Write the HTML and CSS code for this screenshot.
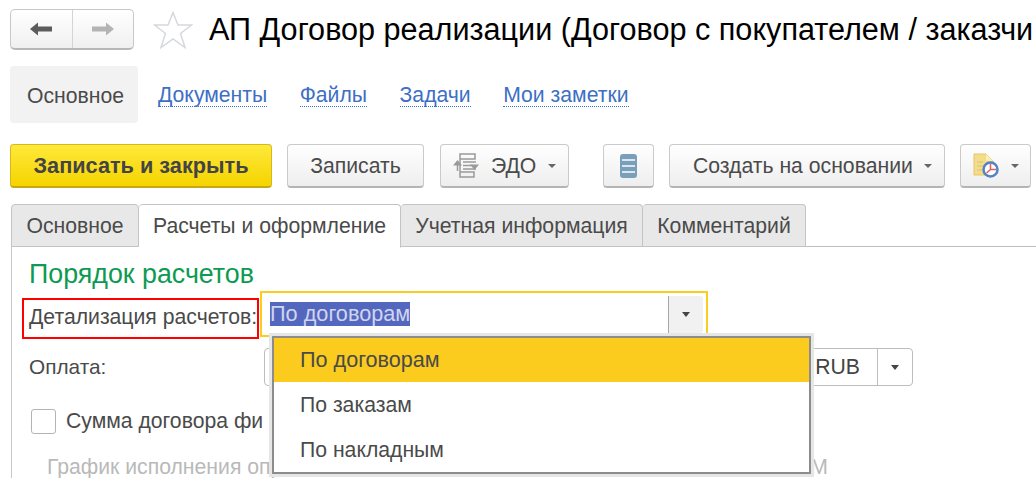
FILE: index.html
```html
<!DOCTYPE html>
<html lang="ru">
<head>
<meta charset="utf-8">
<title>АП Договор реализации</title>
<link rel="stylesheet" href="styles.css">
</head>
<body>
<div class="page">
  <header class="head">
    <div class="nav-group">
      <button class="nav-btn">
        <svg width="24" height="16" viewBox="0 0 24 16"><path d="M1 8 9 1.500V5.500H23V10.500H9V14.500Z" fill="#5c5c5c"/></svg>
      </button>
      <button class="nav-btn">
        <svg width="24" height="16" viewBox="0 0 24 16"><path d="M23 8 15 1.500V5.500H1V10.500H15V14.500Z" fill="#b4b4b4"/></svg>
      </button>
    </div>
    <svg class="star" width="40" height="38" viewBox="0 0 40 38"><path d="M20 1.500 25 14H38.500L27.500 22.500 32 36.500 20 28 8 36.500 12.500 22.500 1.500 14H15Z" fill="#fff" stroke="#d5d8dc" stroke-width="1.500"/></svg>
    <h1 class="title">АП Договор реализации (Договор с покупателем / заказчи</h1>
  </header>

  <nav class="sections">
    <span class="section-current">Основное</span>
    <a class="section-link">Документы</a>
    <a class="section-link">Файлы</a>
    <a class="section-link">Задачи</a>
    <a class="section-link">Мои заметки</a>
  </nav>

  <div class="toolbar">
    <button class="btn btn-primary">Записать и закрыть</button>
    <button class="btn btn-save">Записать</button>
    <button class="btn btn-edo">
      <svg width="26" height="25" viewBox="0 0 26 25" fill="none" stroke="#9a9a9a" stroke-width="1.500"><path d="M7 1H22V6H7ZM7 6V19M7 19H21V24H7ZM10 9H23M10 12.500H20M10 16H23"/><path d="M4.500 7 0 12.500H9ZM21.500 17 17 11.500H26Z" fill="#9a9a9a" stroke="none"/><path d="M4.500 12V18"/></svg>
      <span>ЭДО</span><i class="caret"></i>
    </button>
    <button class="btn btn-icon">
      <svg width="17" height="24" viewBox="0 0 17 24"><rect width="17" height="24" rx="3" fill="#7a9fbb"/><path d="M2 6H15M2 12H15M2 18H15" stroke="#dbe6ee" stroke-width="2"/></svg>
    </button>
    <button class="btn btn-create"><span>Создать на основании</span><i class="caret"></i></button>
    <button class="btn btn-doc">
      <svg width="26" height="25" viewBox="0 0 26 25"><path d="M1 1H13L20 8V22H1Z" fill="#f3dc8a" stroke="#e6c566"/><path d="M13 1V8H20Z" fill="#fbeeb9"/><path d="M4 9H10M4 13H12M4 17H9" stroke="#dcc272"/><circle cx="17.500" cy="16.500" r="7" fill="#fff" stroke="#5482c4" stroke-width="2.500"/><path d="M17.500 16.500V11M17.500 16.500H23M17.500 16.500 13.500 20" stroke="#e06060" stroke-width="1.500"/></svg>
      <i class="caret"></i>
    </button>
  </div>

  <div class="tabs">
    <span class="tab tab-1">Основное</span>
    <span class="tab tab-2 tab-active">Расчеты и оформление</span>
    <span class="tab tab-3">Учетная информация</span>
    <span class="tab tab-4">Комментарий</span>
  </div>

  <main class="panel">
    <h2 class="group-title">Порядок расчетов</h2>
    <div class="row row-detail">
      <label class="label-marked">Детализация расчетов:</label>
      <div class="combo-focus">
        <div class="combo-value"><span class="selected">По договорам</span></div>
        <div class="combo-arrow"><i class="caret caret-dark"></i></div>
      </div>
    </div>
    <div class="row row-pay">
      <label class="label-plain">Оплата:</label>
      <div class="combo-plain">
        <span class="currency">RUB</span>
        <div class="combo-plain-arrow"><i class="caret caret-dark"></i></div>
      </div>
    </div>
    <div class="row row-check">
      <span class="checkbox"></span>
      <span class="check-text">Сумма договора фи</span>
    </div>
    <div class="row row-muted">
      <span>График исполнения опр</span>
      <span class="muted-tail">М</span>
    </div>

    <ul class="popup">
      <li class="popup-item popup-item-on">По договорам</li>
      <li class="popup-item">По заказам</li>
      <li class="popup-item">По накладным</li>
    </ul>
  </main>
</div>
</body>
</html>
```
FILE: styles.css
```css
* { box-sizing: border-box; }
html, body { margin: 0; background: #fff; }
body { font-family: "Liberation Sans", Arial, sans-serif; color: #4a4a4a; }
.page { width: 1036px; height: 478px; overflow: hidden; display: flex; flex-direction: column; }

button { font: inherit; color: inherit; padding: 0; }

.head { display: flex; align-items: center; height: 41px; margin-top: 9px; padding-left: 10px; white-space: nowrap; }
.nav-group { display: flex; width: 124px; height: 41px; border: 1px solid #c8c8c8; border-bottom: 2px solid #b8b8b8; border-radius: 5px; background: linear-gradient(#fff, #f0f0f0); flex: none; }
.nav-btn { flex: 1; border: 0; background: none; display: flex; align-items: center; justify-content: center; }
.nav-btn + .nav-btn { border-left: 1px solid #d4d4d4; }
.star { margin-left: 19px; flex: none; }
.title { margin: 0 0 0 16px; font-size: 30.600px; font-weight: 400; color: #000; line-height: 41px; flex: none; }

.sections { display: flex; align-items: center; height: 57px; margin: 16px 0 0 10px; font-size: 21.200px; }
.section-current { display: flex; align-items: center; width: 128px; height: 57px; padding: 2px 0 0 17px; background: #f2f2f2; border-radius: 4px; }
.section-link { color: #3d6fc4; border-bottom: 1px dotted #3d6fc4; line-height: 22px; margin: 2px 0 0 32.500px; }
.section-current + .section-link { margin-left: 20px; }

.toolbar { display: flex; height: 44px; margin: 21px 0 0 10px; font-size: 21.200px; }
.btn { height: 44px; border: 1px solid #cacaca; border-bottom: 2px solid #b4b4b4; border-radius: 4px; background: linear-gradient(#fff, #eeeeee); display: flex; align-items: center; justify-content: center; flex: none; margin-left: 15px; }
.btn-primary { width: 262px; margin-left: 0; font-weight: 700; font-size: 21.700px; color: #444; background: linear-gradient(#ffe93a, #f5d400); border-color: #d6b81c; border-bottom-color: #c5a814; }
.btn-save { width: 137px; }
.btn-edo { width: 129px; margin-left: 16px; gap: 12px; justify-content: flex-start; padding-left: 12px; }
.btn-icon { width: 51px; margin-left: 34px; }
.btn-create { width: 276px; gap: 11px; justify-content: flex-start; padding-left: 23px; }
.btn-doc { width: 71px; gap: 12px; justify-content: flex-start; padding-left: 12px; }
.caret { display: inline-block; width: 0; height: 0; border: 4.500px solid transparent; border-top: 4px solid #666; border-bottom: 0; flex: none; }
.caret-dark { border-top-color: #444; border-width: 5px 4.500px 0; }

.tabs { display: flex; height: 43px; margin: 16px 0 0 11px; border-bottom: 1px solid #bdbdbd; font-size: 21.200px; }
.tab { display: flex; align-items: center; justify-content: center; height: 43px; background: #e8e8e8; border: 1px solid #c4c4c4; border-left: 0; border-radius: 4px 4px 0 0; }
.tab-1 { width: 128px; border-left: 1px solid #c4c4c4; }
.tab-2 { width: 262px; }
.tab-3 { width: 242px; }
.tab-4 { width: 163px; }
.tab-active { background: #fff; border-bottom-color: #fff; height: 44px; }

.panel { flex: 1; position: relative; margin-left: 11px; padding: 15px 0 0 10px; border-left: 1px solid #c8c8c8; font-size: 21.200px; min-height: 0; }
.group-title { margin: 0 0 0 7px; font-size: 26.800px; line-height: 24px; font-weight: 400; color: #0d9a52; }
.row { display: flex; }
.row-detail { height: 44px; margin-top: 5px; align-items: flex-start; }
.label-marked { width: 237px; height: 41px; margin-top: 7px; padding: 0 0 4px 5px; border: 2px solid #f00; display: flex; align-items: center; white-space: nowrap; flex: none; }
.combo-focus { width: 448px; height: 46px; margin-left: 1px; border: 2px solid #fbcd1e; padding: 3px 3px 0 8px; display: flex; flex: none; }
.combo-value { flex: 1; display: flex; align-items: center; height: 36px; }
.selected { background: #5467bf; color: #cfd5ee; line-height: 24px; font-size: 21.700px; }
.combo-arrow { width: 35px; height: 37px; border-left: 1px solid #a8a8a8; background: #f1f1f1; border-radius: 0 3px 3px 0; display: flex; align-items: center; justify-content: center; }

.row-pay { height: 38px; margin-top: 13px; align-items: center; }
.label-plain { width: 242px; padding-left: 7px; flex: none; font-size: 20.800px; }
.combo-plain { width: 649px; height: 38px; border: 1px solid #bdbdbd; border-radius: 4px; display: flex; align-items: center; justify-content: flex-end; flex: none; }
.currency { margin-right: 17px; color: #444; }
.combo-plain-arrow { width: 35px; height: 36px; border-left: 1px solid #bdbdbd; display: flex; align-items: center; justify-content: center; }

.row-check { height: 26px; margin-top: 22px; align-items: center; padding-left: 9px; }
.checkbox { width: 25px; height: 25px; border: 1px solid #b4b4b4; border-radius: 3px; background: #fff; flex: none; }
.check-text { margin-left: 10px; white-space: nowrap; }

.row-muted { margin-top: 21px; padding-left: 25px; color: #b9b9b9; white-space: nowrap; line-height: 24px; justify-content: space-between; width: 806px; }

.popup { position: absolute; left: 257px; top: 86px; width: 545px; height: 144px; margin: 0; padding: 0; list-style: none; background: #fff; border: 3px solid #e6e6e6; }
.popup::after { content: ""; position: absolute; inset: 0; border: 2px solid #8c8c8c; pointer-events: none; }
.popup-item { display: flex; align-items: center; height: 45px; padding-left: 28px; }
.popup-item:first-child { margin-top: 2px; height: 44px; font-size: 21.600px; }
.popup-item-on { background: #fbcc1e; }
```
